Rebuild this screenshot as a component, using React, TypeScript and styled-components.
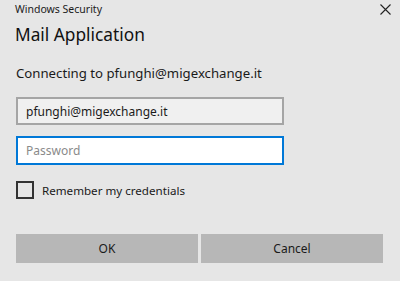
import React from "react";
import styled, { createGlobalStyle } from "styled-components";

const GlobalStyle = createGlobalStyle`
    html, body {
        margin: 0;
        padding: 0;
        background: #e6e6e6;
    }
    body {
        font-family: "Noto Sans", "Open Sans", sans-serif;
        color: #1a1a1a;
    }
`;

const Dialog = styled.div`
    width: 400px;
    height: 281px;
    background: #e6e6e6;
    display: flex;
    flex-direction: column;
    box-sizing: border-box;
    overflow: hidden;
`;

const TitleBar = styled.div`
    height: 18px;
    display: flex;
    align-items: center;
    justify-content: space-between;
    padding: 0 9px 0 15px;
`;

const TitleText = styled.span`
    font-size: 10.5px;
    line-height: 18px;
    color: #1a1a1a;
`;

const CloseButton = styled.button`
    border: none;
    background: none;
    padding: 0;
    width: 12px;
    height: 12px;
    display: flex;
    align-items: center;
    justify-content: center;
`;

const Body = styled.div`
    display: flex;
    flex-direction: column;
    padding: 0 16px;
`;

const Heading = styled.h1`
    margin: 5px 0 0 -1px;
    font-size: 17.3px;
    font-weight: 400;
    line-height: 24px;
    color: #111;
`;

const Message = styled.p`
    margin: 18px 0 0 0;
    font-size: 13.2px;
    line-height: 17px;
    color: #1a1a1a;
`;

const Field = styled.input<{ $focused?: boolean }>`
    box-sizing: border-box;
    width: 268px;
    height: ${(p) => (p.$focused ? "29px" : "28px")};
    margin-top: ${(p) => (p.$focused ? "11px" : "15px")};
    padding: 0 0 0 8px;
    border: 2px solid ${(p) => (p.$focused ? "#0078d7" : "#a5a5a5")};
    background: ${(p) => (p.$focused ? "#ffffff" : "#f0f0f0")};
    font-family: "Noto Sans", "Open Sans", sans-serif;
    font-size: 12px;
    color: #1a1a1a;
    outline: none;
    caret-color: #000;

    &::placeholder {
        color: #8a8a8a;
    }
`;

const CheckRow = styled.label`
    display: flex;
    align-items: center;
    gap: 8px;
    margin-top: 16px;
    font-size: 11.6px;
    color: #1a1a1a;
`;

const CheckBox = styled.span`
    box-sizing: border-box;
    width: 18px;
    height: 18px;
    border: 2px solid #333;
    background: #e6e6e6;
`;

const ButtonRow = styled.div`
    display: flex;
    gap: 3px;
    margin-top: 35px;
`;

const Button = styled.button`
    width: 182px;
    height: 29px;
    border: none;
    background: #b7b7b7;
    font-family: "Noto Sans", "Open Sans", sans-serif;
    font-size: 12px;
    color: #1a1a1a;
    padding: 0;
`;

const App: React.FC = () => {
    return (
        <Dialog>
            <GlobalStyle />
            <TitleBar>
                <TitleText>Windows Security</TitleText>
                <CloseButton aria-label="Close">
                    <svg width="11" height="11" viewBox="0 0 11 11">
                        <path
                            d="M0.5 0.5 L10.5 10.5 M10.5 0.5 L0.5 10.5"
                            stroke="#222"
                            strokeWidth="1.1"
                        />
                    </svg>
                </CloseButton>
            </TitleBar>
            <Body>
                <Heading>Mail Application</Heading>
                <Message>Connecting to pfunghi@migexchange.it</Message>
                <Field type="text" defaultValue="pfunghi@migexchange.it" readOnly />
                <Field type="password" placeholder="Password" $focused autoFocus />
                <CheckRow>
                    <CheckBox />
                    Remember my credentials
                </CheckRow>
                <ButtonRow>
                    <Button>OK</Button>
                    <Button>Cancel</Button>
                </ButtonRow>
            </Body>
        </Dialog>
    );
};

export default App;
